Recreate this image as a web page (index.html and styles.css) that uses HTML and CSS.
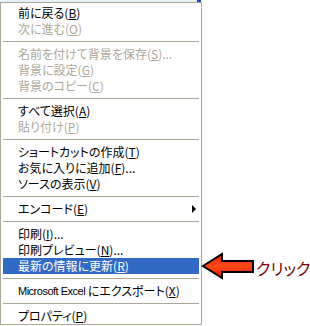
FILE: index.html
```html
<!DOCTYPE html>
<html lang="ja">
<head>
<meta charset="utf-8">
<link rel="stylesheet" href="styles.css">
</head>
<body>
<div class="top">
  <div class="top-fill"></div>
  <div class="top-blue"></div>
</div>
<div class="menu">
  <div class="item">前に戻る(<u>B</u>)</div>
  <div class="item disabled">次に進む(<u>O</u>)</div>
  <div class="sep"></div>
  <div class="item disabled">名前を付けて背景を保存(<u>S</u>)...</div>
  <div class="item disabled">背景に設定(<u>G</u>)</div>
  <div class="item disabled">背景のコピー(<u>C</u>)</div>
  <div class="sep"></div>
  <div class="item">すべて選択(<u>A</u>)</div>
  <div class="item disabled">貼り付け(<u>P</u>)</div>
  <div class="sep"></div>
  <div class="item">ショートカットの作成(<u>T</u>)</div>
  <div class="item">お気に入りに追加(<u>F</u>)...</div>
  <div class="item">ソースの表示(<u>V</u>)</div>
  <div class="sep"></div>
  <div class="item">エンコード(<u>E</u>)<span class="sub"></span></div>
  <div class="sep"></div>
  <div class="item">印刷(<u>I</u>)...</div>
  <div class="item">印刷プレビュー(<u>N</u>)...</div>
  <div class="item active">最新の情報に更新(<u>R</u>)
    <div class="callout">
      <svg class="arrow" width="54" height="28" viewBox="0 0 54 28">
        <defs>
          <linearGradient id="g" x1="0" y1="0" x2="0" y2="1">
            <stop offset="0" stop-color="#e8200c"/>
            <stop offset="0.5" stop-color="#ff4a18"/>
            <stop offset="1" stop-color="#e01c08"/>
          </linearGradient>
        </defs>
        <polygon points="2,14 21,2 21,9 52,9 52,20 21,20 21,26" fill="url(#g)" stroke="#000" stroke-width="2" stroke-linejoin="miter"/>
      </svg>
      <span class="click">クリック</span>
    </div>
  </div>
  <div class="sep"></div>
  <div class="item"><span class="latin">Microsoft Excel</span>&nbsp;にエクスポート(<u>X</u>)</div>
  <div class="sep"></div>
  <div class="item">プロパティ(<u>P</u>)</div>
</div>
</body>
</html>
```

FILE: styles.css
```css
html, body {
  margin: 0;
  padding: 0;
  background: #ffffff;
}

body {
  width: 310px;
  height: 326px;
  overflow: hidden;
  font-family: "MS UI Gothic", "Noto Sans CJK JP", "Liberation Sans", sans-serif;
  font-size: 12px;
  color: #000;
}

.top {
  display: flex;
  height: 2px;
}

.top-fill {
  width: 197px;
  background: #e6f3f8;
}

.top-blue {
  width: 4px;
  background: #1a46c4;
}

.menu {
  width: 196px;
  border: 1px solid #aca899;
  padding: 2px 2px 0 2px;
  background: #ffffff;
}

.item {
  position: relative;
  display: flex;
  align-items: center;
  height: 16px;
  line-height: 16px;
  padding-left: 15px;
  white-space: nowrap;
  font-feature-settings: "palt";
}

.item u {
  text-decoration: underline;
  text-underline-offset: 1px;
}

.latin {
  font-family: "Liberation Sans", sans-serif;
  font-size: 11px;
  letter-spacing: -0.5px;
}

.disabled {
  color: #aca899;
}

.active {
  background: #316ac5;
  color: #ffffff;
}

.sep {
  height: 1px;
  margin: 4px 0;
  background: #aca899;
}

.sub {
  margin-left: auto;
  margin-right: 3px;
  width: 0;
  height: 0;
  border-left: 4px solid #000;
  border-top: 4px solid transparent;
  border-bottom: 4px solid transparent;
}

.callout {
  position: absolute;
  left: calc(100% + 2px);
  top: 50%;
  transform: translateY(-50%);
  display: flex;
  align-items: center;
}

.arrow {
  display: block;
}

.click {
  color: #800000;
  font-size: 16px;
  line-height: 20px;
  font-feature-settings: "palt";
  margin-left: 1px;
  margin-top: 3px;
}
```
